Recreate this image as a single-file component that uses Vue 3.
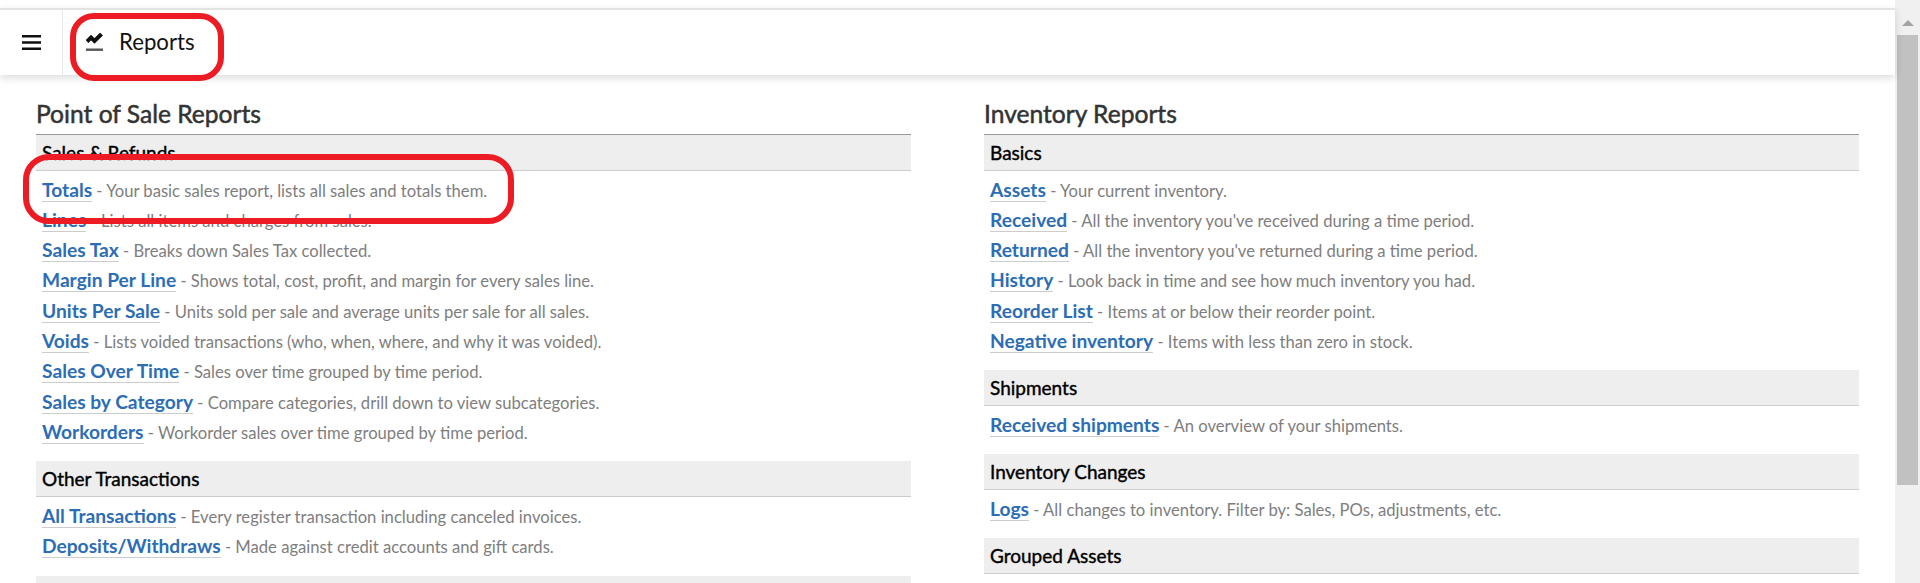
<script setup>
const leftSections = [
  { title: 'Sales & Refunds', items: [
    ['Totals', 'Your basic sales report, lists all sales and totals them.'],
    ['Lines', 'Lists all items and charges from sales.'],
    ['Sales Tax', 'Breaks down Sales Tax collected.'],
    ['Margin Per Line', 'Shows total, cost, profit, and margin for every sales line.'],
    ['Units Per Sale', 'Units sold per sale and average units per sale for all sales.'],
    ['Voids', 'Lists voided transactions (who, when, where, and why it was voided).'],
    ['Sales Over Time', 'Sales over time grouped by time period.'],
    ['Sales by Category', 'Compare categories, drill down to view subcategories.'],
    ['Workorders', 'Workorder sales over time grouped by time period.'],
  ]},
  { title: 'Other Transactions', items: [
    ['All Transactions', 'Every register transaction including canceled invoices.'],
    ['Deposits/Withdraws', 'Made against credit accounts and gift cards.'],
  ]},
  { title: '\u00a0', items: [] },
]
const rightSections = [
  { title: 'Basics', items: [
    ['Assets', 'Your current inventory.'],
    ['Received', "All the inventory you've received during a time period."],
    ['Returned', "All the inventory you've returned during a time period."],
    ['History', 'Look back in time and see how much inventory you had.'],
    ['Reorder List', 'Items at or below their reorder point.'],
    ['Negative inventory', 'Items with less than zero in stock.'],
  ]},
  { title: 'Shipments', items: [
    ['Received shipments', 'An overview of your shipments.'],
  ]},
  { title: 'Inventory Changes', items: [
    ['Logs', 'All changes to inventory. Filter by: Sales, POs, adjustments, etc.'],
  ]},
  { title: 'Grouped Assets', items: [] },
]
const columns = [
  { title: 'Point of Sale Reports', sections: leftSections },
  { title: 'Inventory Reports', sections: rightSections },
]
</script>

<template>
  <div class="page">
    <div class="main">
      <header class="topbar">
        <button class="menu" aria-label="Menu">
          <svg width="19" height="15" viewBox="0 0 19 15"><path d="M0 0h19v2.5H0zM0 6.25h19v2.5H0zM0 12.5h19V15H0z" fill="#111"/></svg>
        </button>
        <div class="crumb">
          <svg width="17" height="18" viewBox="0 0 17 18">
            <path d="M1 8.5 5 4.5 8.5 8 15.5 1" fill="none" stroke="#111" stroke-width="4"/>
            <rect x="0" y="15.5" width="17" height="2.4" fill="#555"/>
          </svg>
          <span>Reports</span>
        </div>
      </header>
      <div class="columns">
        <section v-for="col in columns" :key="col.title" class="column">
          <h2>{{ col.title }}</h2>
          <div v-for="sec in col.sections" :key="sec.title" class="group">
            <h3>{{ sec.title }}</h3>
            <ul v-if="sec.items.length">
              <li v-for="item in sec.items" :key="item[0]"><a>{{ item[0] }}</a> - {{ item[1] }}</li>
            </ul>
          </div>
        </section>
      </div>
    </div>
    <aside class="scrollbar">
      <div class="arrow"></div>
      <div class="thumb"></div>
    </aside>
    <div class="mark mark-title"></div>
    <div class="mark mark-totals"></div>
  </div>
</template>

<style>
html, body { margin: 0; overflow: hidden; background: #fff; }
</style>

<style scoped>
.page {
  position: relative;
  height: 583px;
  overflow: hidden;
  display: flex;
  font-family: Lato, sans-serif;
  background: #fff;
}
.main { flex: 1; min-width: 0; padding-top: 8px; }
.topbar {
  height: 65px;
  border-top: 2px solid #e3e3e3;
  display: flex;
  align-items: stretch;
  background: #fff;
  box-shadow: 0 3px 8px rgba(0, 0, 0, 0.14);
  position: relative;
}
.menu {
  width: 63px;
  border: 0;
  border-right: 1px solid #e6e6e6;
  background: none;
  padding: 0;
  display: flex;
  align-items: center;
  justify-content: center;
}
.crumb {
  display: flex;
  align-items: center;
  gap: 16px;
  padding: 0 0 2px 23px;
  font-size: 22.2px;
  color: #111;
}
.columns {
  display: flex;
  gap: 73px;
  padding: 24px 36px 0;
}
.column { width: 875px; flex: none; }
h2 {
  margin: 0 0 6px;
  font-size: 24.6px;
  line-height: 29px;
  font-weight: 400;
  -webkit-text-stroke: 0.5px #333;
  color: #333;
}
.group { margin-bottom: 14.2px; }
h3 {
  margin: 0;
  padding: 0 6px;
  height: 35px;
  line-height: 35px;
  font-size: 19px;
  font-weight: 400;
  -webkit-text-stroke: 0.4px #000;
  color: #000;
  background: #eee;
  border-top: 1px solid #999;
  border-bottom: 1px solid #ccc;
}
.group + .group h3 { border-top: 0; }
ul { list-style: none; margin: 0; padding: 3.5px 6px 0; }
li {
  height: 30.3px;
  line-height: 30.3px;
  font-size: 16.64px;
  color: #7e7e7e;
  white-space: nowrap;
}
a {
  font-size: 19.2px;
  font-weight: 700;
  color: #2c6db5;
  border-bottom: 1px solid #ccc;
}
.scrollbar {
  width: 25px;
  flex: none;
  background: #f0f0f0;
  display: flex;
  flex-direction: column;
  align-items: center;
}
.arrow {
  margin-top: 20px;
  width: 0;
  height: 0;
  border-left: 6px solid transparent;
  border-right: 6px solid transparent;
  border-bottom: 6px solid #a3a3a3;
}
.thumb { margin-top: 9px; width: 21px; height: 450px; background: #c1c1c1; }
.mark {
  position: absolute;
  box-sizing: border-box;
  border: 6px solid #ed1c24;
}
.mark-title { left: 70px; top: 13px; width: 154px; height: 68px; border-radius: 24px; }
.mark-totals { left: 23px; top: 154px; width: 491px; height: 70px; border-radius: 26px; }
</style>
